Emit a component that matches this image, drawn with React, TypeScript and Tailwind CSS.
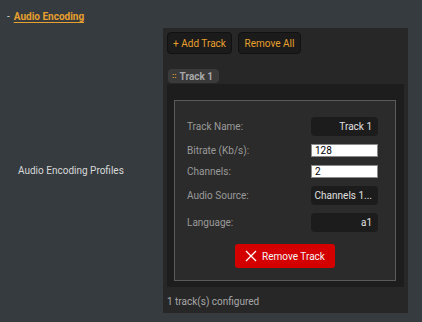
import React from 'react'

const font = { fontFamily: 'Roboto, "Noto Sans", sans-serif' }

function DarkField({ value }: { value: string }) {
  return (
    <div className="flex h-[19px] w-[67px] items-center justify-end rounded-[4px] bg-[#1c1c1c] pr-[6px] text-[10px] leading-none text-[#e0e0e0]">
      {value}
    </div>
  )
}

function WhiteField({ value }: { value: string }) {
  return (
    <div className="flex h-[13px] w-[67px] items-center border border-[#8a8a8a] bg-white pl-[3px] text-[10px] leading-none text-black">
      {value}
    </div>
  )
}

function Row({ label, children }: { label: string; children: React.ReactNode }) {
  return (
    <div className="flex items-center justify-between">
      <span className="text-[10px] leading-none text-[#9a9a9a]">{label}</span>
      {children}
    </div>
  )
}

export default function App() {
  return (
    <div className="h-[322px] w-[422px] overflow-hidden bg-[#353b3f]" style={font}>
      {/* Section title */}
      <div className="flex h-[28px] items-start gap-[4px] pl-[7px] pt-[9px]">
        <span className="text-[10px] text-[#cfcfcf]">-</span>
        <span className="text-[10px] font-bold text-[#e8a02e] underline underline-offset-2">Audio Encoding</span>
      </div>

      <div className="flex">
        <div className="flex w-[163px] items-center pl-[18px]">
          <span className="text-[10px] text-[#d8d8d8]">Audio Encoding Profiles</span>
        </div>

        {/* Tracks panel */}
        <div className="flex h-[285px] w-[245px] flex-col bg-[#272727] p-[4px]">
          <div className="flex gap-[6px]">
            <button className="h-[22px] w-[65px] rounded-[4px] border border-[#111] bg-[#1b1b1b] text-[10px] text-[#e8a02e]">
              + Add Track
            </button>
            <button className="h-[22px] w-[63px] rounded-[4px] border border-[#111] bg-[#1b1b1b] text-[10px] text-[#e8a02e]">
              Remove All
            </button>
          </div>

          <div className="ml-[1px] mt-[15px] flex h-[14px] w-[51px] items-center gap-[3px] rounded-[4px] bg-[#3a3a3a] pl-[4px] text-[10px] font-bold text-[#a8a8a8]">
            <span className="text-[8px] leading-none text-[#e8a02e]">::</span>
            <span>Track 1</span>
          </div>

          <div className="mt-[1px] flex h-[205px] flex-col bg-[#1d1d1d] pl-[7px] pr-[8px] pt-[16px]">
            <div className="flex h-[181px] flex-col border border-[#5a5a5a] bg-[#2b2b2b] px-[12px] pt-[16px]">
              <div className="flex flex-col gap-[8px] pr-[5px]">
                <Row label="Track Name:">
                  <DarkField value="Track 1" />
                </Row>
                <Row label="Bitrate (Kb/s):">
                  <WhiteField value="128" />
                </Row>
                <Row label="Channels:">
                  <WhiteField value="2" />
                </Row>
                <Row label="Audio Source:">
                  <DarkField value="Channels 1..." />
                </Row>
                <Row label="Language:">
                  <DarkField value="a1" />
                </Row>
              </div>
              <div className="mt-[12px] flex justify-center">
                <button className="flex h-[24px] w-[100px] items-center justify-center gap-[5px] rounded-[3px] bg-[#d40000] text-[10px] text-[#f4f4f4]">
                  <svg width="12" height="12" viewBox="0 0 12 12" fill="none" stroke="white" strokeWidth="1.3">
                    <path d="M1 1L11 11M11 1L1 11" />
                  </svg>
                  Remove Track
                </button>
              </div>
            </div>
          </div>

          <div className="mt-[7px] text-[10px] text-[#a8a8a8]">1 track(s) configured</div>
        </div>
      </div>
    </div>
  )
}
